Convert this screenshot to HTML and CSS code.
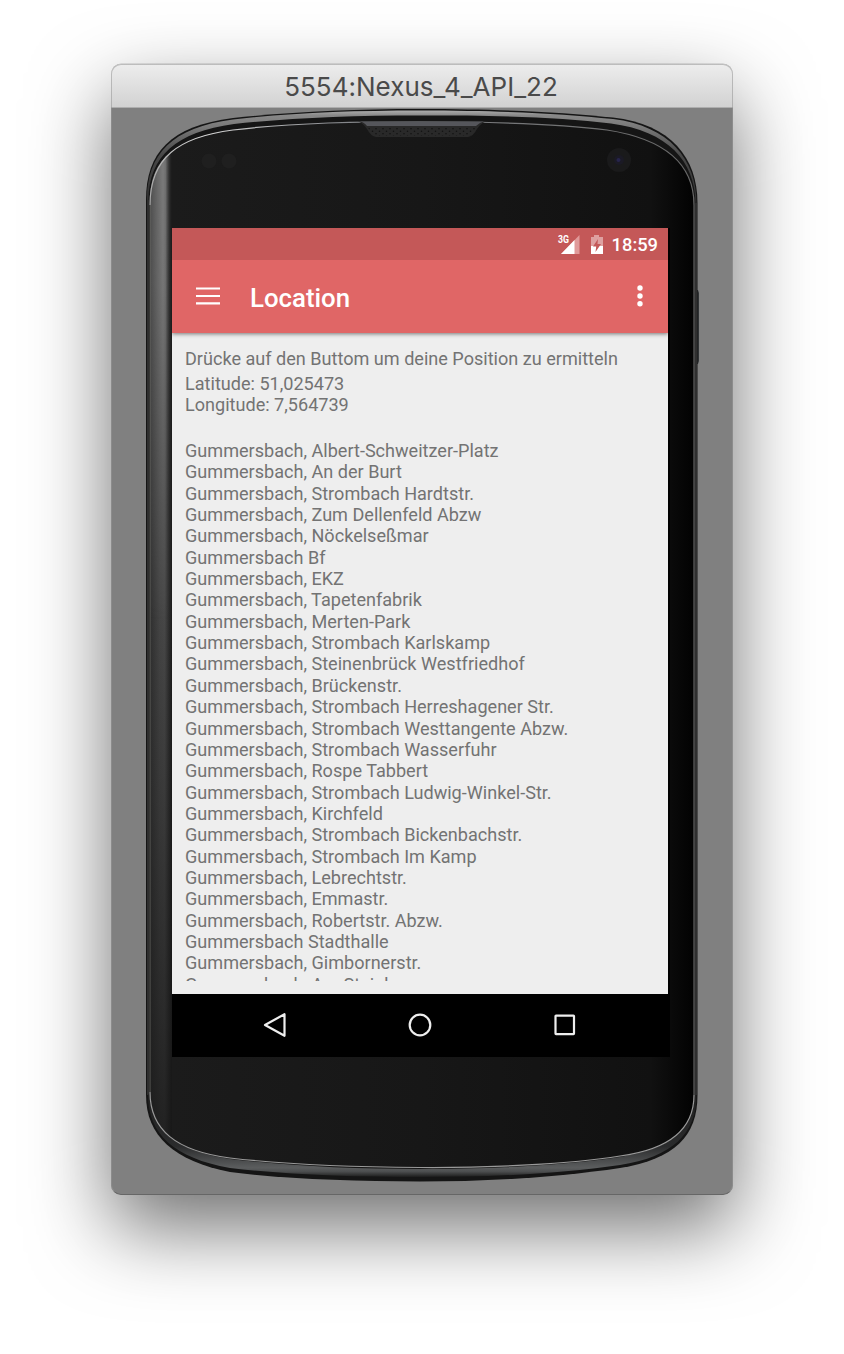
FILE: index.html
```html
<!DOCTYPE html>
<html lang="de">
<head>
<meta charset="utf-8">
<title>5554:Nexus_4_API_22</title>
<link rel="stylesheet" href="styles.css">
</head>
<body>
<main class="window">
  <header class="titlebar">5554:Nexus_4_API_22</header>
  <section class="device">
    <svg class="shell" viewBox="111 108 622 1086" aria-hidden="true">
      <defs>
        <linearGradient id="face" gradientUnits="userSpaceOnUse" x1="150" y1="0" x2="694" y2="0">
          <stop offset="0" stop-color="#303030"/>
          <stop offset=".018" stop-color="#454545"/>
          <stop offset=".027" stop-color="#484848"/>
          <stop offset=".04" stop-color="#1b1b1b"/>
          <stop offset=".5" stop-color="#171717"/>
          <stop offset=".92" stop-color="#111"/>
          <stop offset="1" stop-color="#020202"/>
        </linearGradient>
        <linearGradient id="edge" gradientUnits="userSpaceOnUse" x1="150" y1="0" x2="170" y2="0">
          <stop offset="0" stop-color="#555"/>
          <stop offset=".65" stop-color="#858585"/>
          <stop offset=".78" stop-color="#777"/>
          <stop offset="1" stop-color="#444" stop-opacity="0"/>
        </linearGradient>
        <linearGradient id="fade" gradientUnits="userSpaceOnUse" x1="0" y1="145" x2="0" y2="620">
          <stop offset="0" stop-color="#fff" stop-opacity=".85"/>
          <stop offset=".3" stop-color="#fff" stop-opacity=".75"/>
          <stop offset="1" stop-color="#fff" stop-opacity="0"/>
        </linearGradient>
        <mask id="edgeMask"><rect x="145" y="108" width="60" height="600" fill="url(#fade)"/></mask>
        <linearGradient id="low" gradientUnits="userSpaceOnUse" x1="0" y1="600" x2="0" y2="1150">
          <stop offset="0" stop-color="#171717" stop-opacity="0"/>
          <stop offset="1" stop-color="#171717" stop-opacity=".8"/>
        </linearGradient>
        <linearGradient id="rim" gradientUnits="userSpaceOnUse" x1="0" y1="110" x2="0" y2="200">
          <stop offset="0" stop-color="#b0b0b0"/>
          <stop offset=".06" stop-color="#888"/>
          <stop offset=".2" stop-color="#777"/>
          <stop offset=".5" stop-color="#484848"/>
          <stop offset="1" stop-color="#333"/>
        </linearGradient>
        <linearGradient id="chin" gradientUnits="userSpaceOnUse" x1="0" y1="1100" x2="0" y2="1177">
          <stop offset="0" stop-color="#222"/>
          <stop offset=".6" stop-color="#2a2b2c"/>
          <stop offset=".88" stop-color="#5b5d5e"/>
          <stop offset=".93" stop-color="#4c4e4f"/>
          <stop offset="1" stop-color="#1c1c1c"/>
        </linearGradient>
        <linearGradient id="inner" gradientUnits="userSpaceOnUse" x1="150" y1="0" x2="694" y2="0">
          <stop offset="0" stop-color="#aaa"/>
          <stop offset=".1" stop-color="#d8d8d8"/>
          <stop offset=".35" stop-color="#85878b"/>
          <stop offset="1" stop-color="#666"/>
        </linearGradient>
        <clipPath id="faceClip"><path d="M150 200C150 158 178 137 233 130C290 123 350 122 420 122C500 122 560 124 607 130C665 139 694 164 694 205V1095C694 1127 673 1149 620 1156C570 1164 490 1168 420 1168C350 1168 290 1165 230 1158C176 1151 150 1130 150 1092Z"/></clipPath>
        <pattern id="mesh" width="7" height="5" patternUnits="userSpaceOnUse">
          <circle cx="1.5" cy="1.2" r=".8" fill="#111"/><circle cx="5" cy="3.7" r=".8" fill="#111"/>
        </pattern>
      </defs>
      <path d="M696 290h2l1 3v68l-1 3h-2z" fill="#303335"/>
      <path d="M146 200C146 153 170 126 233 118C290 112 350 109 420 109C500 109 560 112 613 117.500C671 124 697.500 158 697.500 203V1095C697.500 1136 675 1159 620 1168C560 1177 490 1181.500 420 1181.500C350 1181 285 1179 230 1172C174 1161 146 1136 146 1095Z" fill="#151515"/>
      <path d="M147 200C147 154 172 127.500 233 119.500C290 113 350 110.500 420 110.500C500 110.500 560 113.500 613 119C669 126 696.500 159 696.500 203H695.500C695 161 668 131 611 123.500C560 117 500 115.500 420 115.500C350 115.500 290 118 234 124C176 132 149 156 148.500 200Z" fill="url(#rim)"/>
      <path d="M148 200V1095M696 203V1095" stroke="#4b4b4b" stroke-width="1"/>
      <path d="M148 1095C148 1134 174 1158 230 1168C285 1174.500 350 1177 420 1177C490 1177 560 1174 620 1165C672 1157 696.500 1134 696.500 1095H694C694 1127 673 1149 620 1157C570 1165 490 1169 420 1169C350 1169 290 1166 230 1159C176 1151 150 1130 150 1092Z" fill="url(#chin)"/>
      <path d="M150 200C150 158 178 137 233 130C290 123 350 122 420 122C500 122 560 124 607 130C665 139 694 164 694 205V1095C694 1127 673 1149 620 1156C570 1164 490 1168 420 1168C350 1168 290 1165 230 1158C176 1151 150 1130 150 1092Z" fill="url(#face)"/>
      <g clip-path="url(#faceClip)">
        <rect x="150" y="120" width="22" height="600" fill="url(#edge)" mask="url(#edgeMask)"/>
        <rect x="150" y="600" width="22" height="600" fill="url(#low)"/>
      </g>
      <path d="M150 205C150 158 178 137 233 130C290 123 350 121.500 420 121.500C500 122 560 124 607 130C665 139 694 164 694 205" fill="none" stroke="url(#inner)" stroke-width="1.200"/>
      <path d="M150 1092C150 1130 176 1151 230 1158C290 1165 350 1167 420 1167.500C490 1168 570 1164 620 1156C673 1149 694 1127 694 1095" fill="none" stroke="#999" stroke-width="1.200"/>
      <path d="M150 205V1092" stroke="#6c6c68" stroke-width=".8"/>
      <path d="M694 205V1095" stroke="#777" stroke-width="1"/>
      <path d="M358 121.500H486Q481 123 477 129Q473 136.500 468 137H376Q371 136.500 367 129Q363 123 358 121.500Z" fill="#292929"/>
      <path d="M360 121.500H484Q480 122 476 126H367Q364 122 360 121.500Z" fill="#55565b"/>
      <path d="M368 128H476L470 136H374Z" fill="url(#mesh)"/>
      <circle cx="209" cy="161" r="7.500" fill="#1f1f1f"/><circle cx="229" cy="161" r="7.500" fill="#1f1f1f"/>
      <circle cx="619" cy="160" r="12" fill="#1a1a1b"/><circle cx="619" cy="160" r="5" fill="#1b1a25"/><circle cx="618.500" cy="160" r="2" fill="#26244c"/>
    </svg>
    <div class="screen">
      <div class="status">
        <svg class="signal" viewBox="0 0 24 22"><text class="net" x="1" y="8.500" textLength="11" lengthAdjust="spacingAndGlyphs">3G</text><path d="M22.500 1V20H4z" fill="#e09a9a"/><path d="M17.500 6V20H4z" fill="#fff"/></svg>
        <svg class="battery" viewBox="0 0 14 20"><path d="M4 0h5v2h4v17H1V2h3z" fill="#dea0a0"/><path d="M1 11h12v8H1z" fill="#fff"/><path d="M8 4L3 11.500h3.200L5.500 17L11 9H7.500z" fill="#c45858"/></svg>
        <span class="clock">18:59</span>
      </div>
      <div class="appbar">
        <svg class="menu" viewBox="0 0 24 18"><path d="M0 1.500h24M0 9h24M0 16.300h24" stroke="#fff" stroke-width="2.200"/></svg>
        <h1 class="heading">Location</h1>
        <svg class="more" viewBox="0 0 6 22"><circle cx="3" cy="3" r="2.700"/><circle cx="3" cy="11" r="2.700"/><circle cx="3" cy="18.700" r="2.700"/></svg>
      </div>
      <div class="content">
        <p class="hint">Drücke auf den Buttom um deine Position zu ermitteln</p>
        <p class="coords">Latitude: 51,025473<br>Longitude: 7,564739</p>
        <ul class="stops">
          <li>Gummersbach, Albert-Schweitzer-Platz</li>
          <li>Gummersbach, An der Burt</li>
          <li>Gummersbach, Strombach Hardtstr.</li>
          <li>Gummersbach, Zum Dellenfeld Abzw</li>
          <li>Gummersbach, Nöckelseßmar</li>
          <li>Gummersbach Bf</li>
          <li>Gummersbach, EKZ</li>
          <li>Gummersbach, Tapetenfabrik</li>
          <li>Gummersbach, Merten-Park</li>
          <li>Gummersbach, Strombach Karlskamp</li>
          <li>Gummersbach, Steinenbrück Westfriedhof</li>
          <li>Gummersbach, Brückenstr.</li>
          <li>Gummersbach, Strombach Herreshagener Str.</li>
          <li>Gummersbach, Strombach Westtangente Abzw.</li>
          <li>Gummersbach, Strombach Wasserfuhr</li>
          <li>Gummersbach, Rospe Tabbert</li>
          <li>Gummersbach, Strombach Ludwig-Winkel-Str.</li>
          <li>Gummersbach, Kirchfeld</li>
          <li>Gummersbach, Strombach Bickenbachstr.</li>
          <li>Gummersbach, Strombach Im Kamp</li>
          <li>Gummersbach, Lebrechtstr.</li>
          <li>Gummersbach, Emmastr.</li>
          <li>Gummersbach, Robertstr. Abzw.</li>
          <li>Gummersbach Stadthalle</li>
          <li>Gummersbach, Gimbornerstr.</li>
          <li>Gummersbach, Am Steinberg</li>
        </ul>
      </div>
    </div>
    <nav class="navbar">
      <svg class="nav-icon" viewBox="0 0 28 28"><path d="M23.500 3.200V24.800L4 14z"/></svg>
      <svg class="nav-icon" viewBox="0 0 28 28"><circle cx="14" cy="14" r="10.300"/></svg>
      <svg class="nav-icon" viewBox="0 0 28 28"><rect x="4.500" y="4.600" width="18.500" height="18.500" rx=".5"/></svg>
    </nav>
  </section>
</main>
</body>
</html>
```
FILE: styles.css
```css
* { box-sizing: border-box; }
body {
  margin: 0;
  height: 1354px;
  overflow: hidden;
  background: #fff;
  font-family: Roboto, sans-serif;
}
.window {
  position: relative;
  display: flex;
  flex-direction: column;
  width: 622px;
  height: 1131px;
  margin: 64px 0 0 111px;
  border-radius: 10px;
  background: #808080;
  box-shadow: 0 -1px 0 -.5px rgba(0,0,0,.2), 0 33px 80px rgba(0,0,0,.56);
  overflow: hidden;
}
.window::after {
  content: "";
  position: absolute;
  inset: 0;
  border: 1px solid rgba(150,150,150,.55);
  border-bottom-color: #666;
  border-radius: 10px;
}
.titlebar {
  flex: 0 0 44px;
  height: 44px;
  border-bottom: 1px solid #aeaeae;
  background: linear-gradient(#ededed, #d2d2d2);
  color: #4a4a4a;
  font: 26px/45px Inter, sans-serif;
  padding-right: 2px;
  letter-spacing: .02px;
  text-align: center;
}
.device {
  position: relative;
  flex: 1;
  padding: 120px 0 0 61px;
}
.shell {
  position: absolute;
  top: 0;
  left: 0;
  width: 622px;
  height: 1086px;
}
.screen {
  position: relative;
  display: flex;
  flex-direction: column;
  width: 496px;
  height: 766px;
  background: #eee;
  box-shadow: 2px 0 #000;
}
.status {
  display: flex;
  align-items: center;
  justify-content: flex-end;
  height: 32px;
  padding: 1px 10px 0 0;
  background: #c45858;
}
.signal { width: 24px; height: 22px; margin-right: 9px; overflow: visible; }
.net { font: 700 10px Roboto, sans-serif; fill: #fff; }
.battery { width: 14px; height: 20px; margin-right: 8px; }
.clock { color: #fff; font: 500 18.300px/34px Roboto, sans-serif; }
.appbar {
  position: relative;
  display: flex;
  align-items: center;
  height: 73px;
  padding: 0 25px 1px 24px;
  background: #e06666;
  box-shadow: 0 1px 4px rgba(0,0,0,.5);
  clip-path: inset(0 0 -6px 0);
}
.menu { width: 24px; height: 18px; }
.heading {
  margin: 4px 0 0 30px;
  color: #fff;
  font: 500 25.800px/30px Roboto, sans-serif;
}
.more { width: 6px; height: 22px; margin-left: auto; fill: #fff; }
.content {
  height: 648px;
  padding: 15px 13px 0;
  overflow: hidden;
  color: #737373;
  font-size: 18.080px;
  line-height: 21.340px;
}
.hint, .coords { margin: 0; }
.coords { margin-top: 3.500px; }
.stops {
  margin: 24.500px 0 0;
  padding: 0;
  list-style: none;
  white-space: nowrap;
}
.navbar {
  position: relative;
  display: flex;
  align-items: center;
  justify-content: space-between;
  width: 498px;
  height: 63px;
  padding: 0 91px 1px 89px;
  background: #000;
}
.nav-icon {
  width: 28px;
  height: 28px;
  fill: none;
  stroke: #eee;
  stroke-width: 2.200;
  stroke-linejoin: round;
}
```
